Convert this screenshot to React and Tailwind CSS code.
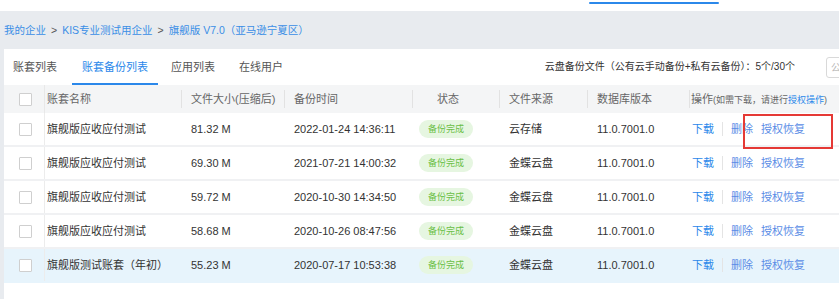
import React from 'react';

const rows = [
    { name: '旗舰版应收应付测试', size: '81.32 M', time: '2022-01-24 14:36:11', source: '云存储' },
    { name: '旗舰版应收应付测试', size: '69.30 M', time: '2021-07-21 14:00:32', source: '金蝶云盘' },
    { name: '旗舰版应收应付测试', size: '59.72 M', time: '2020-10-30 14:34:50', source: '金蝶云盘' },
    { name: '旗舰版应收应付测试', size: '58.68 M', time: '2020-10-26 08:47:56', source: '金蝶云盘' },
    { name: '旗舰版测试账套（年初）', size: '55.23 M', time: '2020-07-17 10:53:38', source: '金蝶云盘', active: true },
];

function Checkbox() {
    return <span className="block w-[13px] h-[13px] border border-[#cfcfcf] rounded-[1px] bg-white" />;
}

function HeadCell({ width, children, pad = 'pl-[9px]' }) {
    return (
        <div className="flex items-center shrink-0" style={{ width }}>
            <span className="w-px h-[18px] bg-[#e2e2e2]" />
            <span className={`${pad} whitespace-nowrap`}>{children}</span>
        </div>
    );
}

export default function App() {
    return (
        <div className="relative w-[839px] h-[299px] overflow-hidden bg-[#e8ebef] font-['Liberation_Sans','Noto_Sans_CJK_SC',sans-serif] text-[#333]">
            {/* top nav strip */}
            <div className="h-[11px] bg-white pl-[589px] pt-[2px]">
                <div className="w-[130px] h-[2px] rounded-full bg-[#2b88ea]" />
            </div>

            {/* breadcrumb */}
            <div className="h-[38px] flex items-center pl-[4px] text-[10.5px] leading-none text-[#3a8ee6] whitespace-nowrap">
                <span>我的企业</span>
                <span className="text-[#555] px-[5px]">&gt;</span>
                <span>KIS专业测试用企业</span>
                <span className="text-[#555] px-[5px]">&gt;</span>
                <span>旗舰版 V7.0（亚马逊宁夏区）</span>
            </div>

            {/* panel */}
            <div className="ml-[4px] h-[250px] bg-white flex flex-col overflow-hidden">
                <div className="h-[36px] flex items-stretch shrink-0">
                    <div className="flex items-stretch -ml-[2px] text-[11px] leading-none">
                        <div className="w-[66px] flex items-center justify-center text-[#555]">账套列表</div>
                        <div className="w-[86px] ml-[4px] flex items-center justify-center text-[#2b88ea] border-b-2 border-[#2b88ea] pt-[2px]">账套备份列表</div>
                        <div className="w-[66px] ml-[2px] flex items-center justify-center text-[#555]">应用列表</div>
                        <div className="w-[66px] ml-[2px] flex items-center justify-center text-[#555]">在线用户</div>
                    </div>
                    <div className="ml-auto flex items-center">
                        <span className="text-[10px] leading-none whitespace-nowrap text-[#333]">云盘备份文件（公有云手动备份+私有云备份）：5个/30个</span>
                        <div className="ml-[31px] -mr-[47px] w-[60px] h-[21px] border border-[#d9d9d9] rounded-[3px] flex items-center pl-[4px] text-[10px] text-[#bbb]">公</div>
                    </div>
                </div>

                {/* header */}
                <div className="h-[28px] flex items-stretch bg-[#f4f5f6] text-[11px] leading-none text-[#666] shrink-0">
                    <div className="w-[41px] shrink-0 flex items-center pl-[15px] border-r border-[#e8e8e8]">
                        <Checkbox />
                    </div>
                    <div className="w-[136px] shrink-0 flex items-center pl-[2px]">账套名称</div>
                    <HeadCell width={103}>文件大小(压缩后)</HeadCell>
                    <HeadCell width={128}>备份时间</HeadCell>
                    <HeadCell width={87} pad="pl-[24px]">状态</HeadCell>
                    <HeadCell width={88}>文件来源</HeadCell>
                    <HeadCell width={102}>数据库版本</HeadCell>
                    <HeadCell width={160} pad="pl-[1px]">
                        操作<span className="text-[9px]">(如需下载，请进行<span className="text-[#2b88ea]">授权操作</span>)</span>
                    </HeadCell>
                </div>

                {/* rows */}
                {rows.map((r, i) => (
                    <div
                        key={i}
                        className={`h-[34px] flex items-stretch text-[11px] leading-none shrink-0 border-b-2 ${r.active ? 'bg-[#e7f4fc] border-[#e7f4fc]' : 'border-[#f0f1f3]'}`}
                    >
                        <div className="w-[41px] shrink-0 flex items-center pl-[15px] border-r border-[#ececec]">
                            <Checkbox />
                        </div>
                        <div className="w-[136px] shrink-0 flex items-center pl-[2px] whitespace-nowrap">{r.name}</div>
                        <div className="w-[103px] shrink-0 flex items-center pl-[10px]">{r.size}</div>
                        <div className="w-[128px] shrink-0 flex items-center pl-[10px] whitespace-nowrap">{r.time}</div>
                        <div className="w-[87px] shrink-0 flex items-center pl-[7px]">
                            <span className="h-[18px] px-[9px] rounded-full bg-[#e6f6e1] text-[#6abf45] text-[9px] flex items-center">备份完成</span>
                        </div>
                        <div className="w-[88px] shrink-0 flex items-center pl-[10px]">{r.source}</div>
                        <div className="w-[102px] shrink-0 flex items-center pl-[10px]">{r.version || '11.0.7001.0'}</div>
                        <div className="flex items-center pl-[3px] whitespace-nowrap">
                            <span className="text-[#2b88ea]">下载</span>
                            <span className="w-px h-[14px] bg-[#e4e4e4] mx-[8px]" />
                            <span className="text-[#5b8de6]">删除</span>
                            <span className="text-[#5b8de6] ml-[8px]">授权恢复</span>
                        </div>
                    </div>
                ))}
            </div>

            {/* annotation box */}
            <div className="absolute left-[743px] top-[114px] w-[90px] h-[35px] border-2 border-[#e53935]" />
        </div>
    );
}
